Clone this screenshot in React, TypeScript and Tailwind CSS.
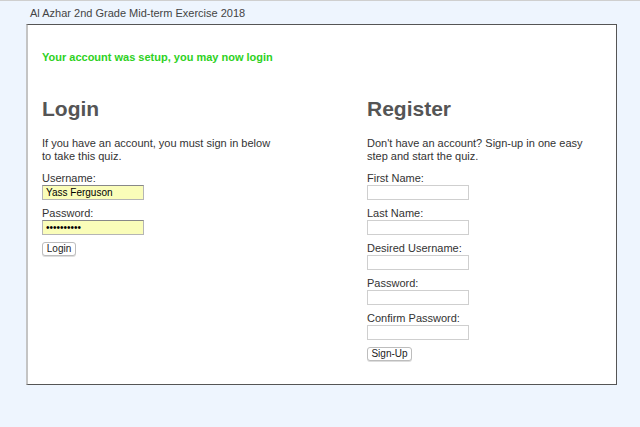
const font = "font-['Liberation_Sans',Arial,sans-serif]";

const Field = ({ label, value, password, filled }: { label: string; value?: string; password?: boolean; filled?: boolean }) => (
  <div className="mb-[7px]">
    <div className="text-[11px] leading-[13px] text-[#333]">{label}</div>
    <input
      readOnly
      type={password ? 'password' : 'text'}
      value={value ?? ''}
      className={`block w-[102px] h-[15px] px-[3px] text-[10px] text-black outline-none border ${
        filled
          ? 'bg-[#fafdb9] border-[#b5b5b5] border-t-[#888]'
          : 'bg-white border-[#cfcfcf]'
      }`}
    />
  </div>
);

const SmallButton = ({ children, width }: { children: string; width: string }) => (
  <button
    className={`${width} h-[14px] flex items-center justify-center rounded-[3px] border border-[#bdbdbd] bg-white text-[10px] leading-none text-[#222] shadow-[0_1px_0_#ddd]`}
  >
    {children}
  </button>
);

export default function App() {
  return (
    <div className={`${font} w-[640px] h-[427px] bg-[#eef5fe] border-t border-[#cfcfcf] overflow-hidden`}>
      <div className="h-[23px] pl-[30px] pt-[5px] text-[11px] leading-[14px] text-[#444]">
        Al Azhar 2nd Grade Mid-term Exercise 2018
      </div>
      <div className="ml-[26px] w-[591px] h-[361px] bg-white border-t border-r border-b border-[#555] border-l-2 border-l-[#c4c4c4] pl-[14px] pt-[25px]">
        <div className="text-[11px] leading-[14px] font-bold text-[#2ed11e]">
          Your account was setup, you may now login
        </div>
        <div className="flex mt-[32px]">
          <div className="w-[325px]">
            <h1 className="text-[21px] leading-[25px] font-bold text-[#555]">Login</h1>
            <p className="mt-[16px] w-[230px] text-[11px] leading-[13px] text-[#333]">
              If you have an account, you must sign in below to take this quiz.
            </p>
            <div className="mt-[9px]">
              <Field label="Username:" value="Yass Ferguson" filled />
              <Field label="Password:" value="••••••••••" password filled />
              <SmallButton width="w-[34px]">Login</SmallButton>
            </div>
          </div>
          <div className="w-[240px]">
            <h1 className="text-[21px] leading-[25px] font-bold text-[#555]">Register</h1>
            <p className="mt-[16px] w-[222px] text-[11px] leading-[13px] text-[#333]">
              Don't have an account? Sign-up in one easy step and start the quiz.
            </p>
            <div className="mt-[9px]">
              <Field label="First Name:" />
              <Field label="Last Name:" />
              <Field label="Desired Username:" />
              <Field label="Password:" />
              <Field label="Confirm Password:" />
              <SmallButton width="w-[45px]">Sign-Up</SmallButton>
            </div>
          </div>
        </div>
      </div>
    </div>
  );
}
